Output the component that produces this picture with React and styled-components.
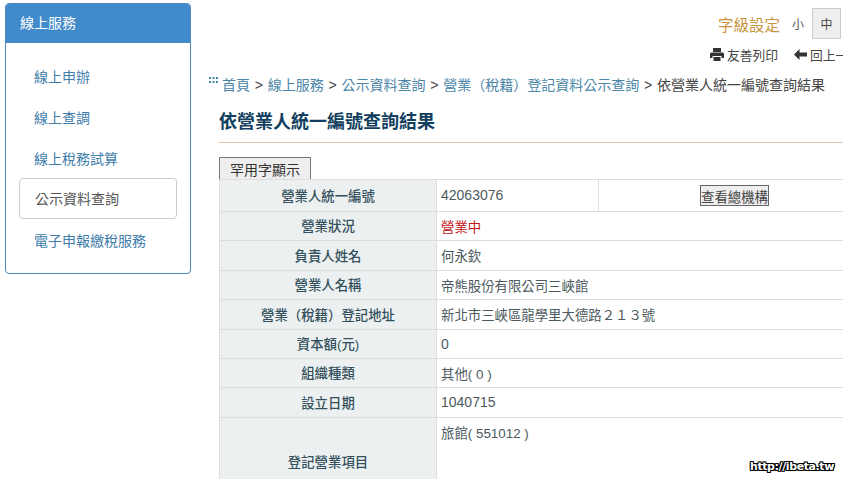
import styled, { createGlobalStyle } from "styled-components";

const navItems = ["線上申辦", "線上查調", "線上稅務試算", "公示資料查詢", "電子申報繳稅服務"];

const crumbs = ["首頁", "線上服務", "公示資料查詢", "營業（稅籍）登記資料公示查詢"];

const rows = [
  { label: "營業狀況", value: "營業中", open: true, height: 29 },
  { label: "負責人姓名", value: "何永欽", height: 30 },
  { label: "營業人名稱", value: "帝熊股份有限公司三峽館", height: 29 },
  { label: "營業（稅籍）登記地址", value: "新北市三峽區龍學里大德路２１３號", height: 30 },
  { label: "資本額(元)", value: "0", numeric: true, height: 29 },
  { label: "組織種類", value: "其他( 0 )", height: 29 },
  { label: "設立日期", value: "1040715", numeric: true, height: 30 },
];

export default function App() {
  return (
    <Page>
      <GlobalStyle />
      <Sidebar>
        <PanelTitle>線上服務</PanelTitle>
        <NavList>
          {navItems.map((item) => (
            <NavItem key={item} $active={item === "公示資料查詢"}>
              {item}
            </NavItem>
          ))}
        </NavList>
      </Sidebar>

      <Main>
        <FontBar>
          <FontLabel>字級設定</FontLabel>
          <FontSmall>小</FontSmall>
          <FontButton>中</FontButton>
        </FontBar>
        <ToolBar>
          <ToolLink>
            <svg width="14" height="13" viewBox="0 0 14 13">
              <path
                d="M3 0h8v4H3zM1.500 4.500h11A1.500 1.500 0 0 1 14 6v4h-2.500V8h-9v2H0V6a1.500 1.500 0 0 1 1.500-1.500zM3.500 9h7v4h-7z"
                fill="#333"
              />
            </svg>
            友善列印
          </ToolLink>
          <ToolLink>
            <svg width="13" height="11" viewBox="0 0 13 11">
              <path d="M0 5.500 5.500 0v3.500H13v4H5.500V11z" fill="#333" />
            </svg>
            回上一頁
          </ToolLink>
        </ToolBar>

        <Breadcrumb>
          <svg width="9" height="6" viewBox="0 0 9 6">
            <path
              d="M0 0h2v2H0zM3.500 0h2v2h-2zM7 0h2v2H7zM0 4h2v2H0zM3.500 4h2v2h-2zM7 4h2v2H7z"
              fill="#4a86a8"
            />
          </svg>
          {crumbs.map((crumb) => (
            <span key={crumb}>
              <CrumbLink>{crumb}</CrumbLink>
              {" > "}
            </span>
          ))}
          依營業人統一編號查詢結果
        </Breadcrumb>

        <Title>依營業人統一編號查詢結果</Title>

        <RareButton>罕用字顯示</RareButton>

        <ResultTable>
          <colgroup>
            <col width="217" />
            <col width="162" />
            <col width="271" />
          </colgroup>
          <tbody>
            <tr>
              <LabelCell $height={32}>營業人統一編號</LabelCell>
              <ValueCell $numeric>42063076</ValueCell>
              <ActionCell>
                <HeadOfficeButton>查看總機構</HeadOfficeButton>
              </ActionCell>
            </tr>
            {rows.map((row) => (
              <tr key={row.label}>
                <LabelCell $height={row.height}>{row.label}</LabelCell>
                <ValueCell colSpan={2} $open={row.open} $numeric={row.numeric}>
                  {row.value}
                </ValueCell>
              </tr>
            ))}
            <tr>
              <LabelCell $height={88}>登記營業項目</LabelCell>
              <ItemsCell colSpan={2}>旅館( 551012 )</ItemsCell>
            </tr>
          </tbody>
        </ResultTable>
      </Main>

      <Watermark>http://ibeta.tw</Watermark>
    </Page>
  );
}

const GlobalStyle = createGlobalStyle`
  html, body {
    margin: 0;
    padding: 0;
    height: 479px;
    overflow: hidden;
    background: #fff;
  }
  body {
    font-family: "Liberation Sans", "Noto Sans CJK TC", sans-serif;
  }
`;

const Page = styled.div`
  position: relative;
  display: flex;
  width: 843px;
  height: 479px;
  overflow: hidden;
`;

const Sidebar = styled.aside`
  flex: none;
  align-self: flex-start;
  box-sizing: border-box;
  width: 186px;
  height: 271px;
  margin: 3px 0 0 5px;
  border: 1px solid #4f87b8;
  border-radius: 4px;
  overflow: hidden;
`;

const PanelTitle = styled.div`
  height: 39px;
  padding-left: 14px;
  background: #428bca;
  color: #fff;
  font-size: 14px;
  line-height: 39px;
`;

const NavList = styled.div`
  display: flex;
  flex-direction: column;
  padding: 13px 13px 0;
`;

const NavItem = styled.div`
  flex: none;
  box-sizing: border-box;
  height: 41px;
  margin: ${(p) => (p.$active ? "-1px 0 1px" : "0")};
  padding-left: ${(p) => (p.$active ? "15px" : "14px")};
  border: 1px solid ${(p) => (p.$active ? "#ccc" : "transparent")};
  border-radius: 4px;
  color: ${(p) => (p.$active ? "#555" : "#3f7dab")};
  font-size: 14px;
  line-height: 41px;
`;

const Main = styled.main`
  flex: none;
  width: 650px;
  margin-left: 28px;
  display: flex;
  flex-direction: column;
  white-space: nowrap;
  > * {
    flex: none;
  }
`;

const FontBar = styled.div`
  display: flex;
  align-items: center;
  height: 31px;
  margin-top: 8px;
  padding-left: 499px;
`;

const FontLabel = styled.span`
  color: #c9963f;
  font-size: 15.5px;
`;

const FontSmall = styled.span`
  margin-left: 12px;
  color: #555;
  font-size: 12px;
`;

const FontButton = styled.span`
  box-sizing: border-box;
  display: flex;
  align-items: center;
  justify-content: center;
  width: 29px;
  height: 31px;
  margin-left: 8px;
  border: 1px solid #ccc;
  background: #eee;
  color: #444;
  font-size: 12px;
`;

const ToolBar = styled.div`
  display: flex;
  align-items: center;
  gap: 16px;
  height: 18px;
  margin-top: 6px;
  padding-left: 491px;
`;

const ToolLink = styled.span`
  display: flex;
  align-items: center;
  gap: 3px;
  color: #444;
  font-size: 12.75px;
`;

const Breadcrumb = styled.div`
  display: flex;
  align-items: center;
  white-space: pre;
  word-spacing: 0.9px;
  height: 20px;
  margin: 11px 0 0 -10px;
  color: #444;
  font-size: 14px;
  svg {
    margin: -8px 4px 0 0;
  }
`;

const CrumbLink = styled.span`
  color: #4a86a8;
`;

const Title = styled.h1`
  margin: 18px 0 0;
  height: 30px;
  border-bottom: 1px solid #e2c9ab;
  color: #123f60;
  font-size: 18px;
  font-weight: 700;
  line-height: 20px;
`;

const RareButton = styled.button`
  box-sizing: border-box;
  align-self: flex-start;
  width: 92px;
  height: 23px;
  margin-top: 14px;
  padding: 0;
  border: 1px solid #777;
  background: #eee;
  color: #333;
  font-family: inherit;
  font-size: 14px;
`;

const ResultTable = styled.table`
  table-layout: fixed;
  width: 650px;
  border-collapse: collapse;
  margin-top: -1px;
  font-size: 13.4px;
  td {
    box-sizing: border-box;
    border: 1px solid #ddd;
  }
`;

const LabelCell = styled.td`
  height: ${(p) => p.$height}px;
  padding: 0 0 2px;
  background: #ecf0f1;
  color: #33505c;
  font-weight: 500;
  text-align: center;
`;

const ValueCell = styled.td`
  padding: 0 0 1px 4px;
  color: ${(p) => (p.$open ? "#c4141b" : "#4c5a60")};
  font-size: ${(p) => (p.$numeric ? "14px" : "13.4px")};
`;

const ActionCell = styled.td`
  padding: 0 0 0 101px;
`;

const HeadOfficeButton = styled.button`
  box-sizing: border-box;
  display: block;
  width: 69px;
  height: 21px;
  padding: 0;
  border: 1px solid #666;
  background: #eee;
  color: #444;
  font-family: inherit;
  font-size: 13.4px;
`;

const ItemsCell = styled.td`
  padding: 4px 0 0 4px;
  color: #4c5a60;
  vertical-align: top;
`;

const Watermark = styled.div`
  position: absolute;
  right: 9px;
  bottom: 6px;
  color: #fff;
  font-family: "DejaVu Sans", sans-serif;
  font-size: 11px;
  font-weight: 700;
  letter-spacing: -0.4px;
  text-shadow: 1px 0 #000, -1px 0 #000, 0 1px #000, 0 -1px #000, 1px 1px #000,
    -1px -1px #000, 1px -1px #000, -1px 1px #000;
`;
